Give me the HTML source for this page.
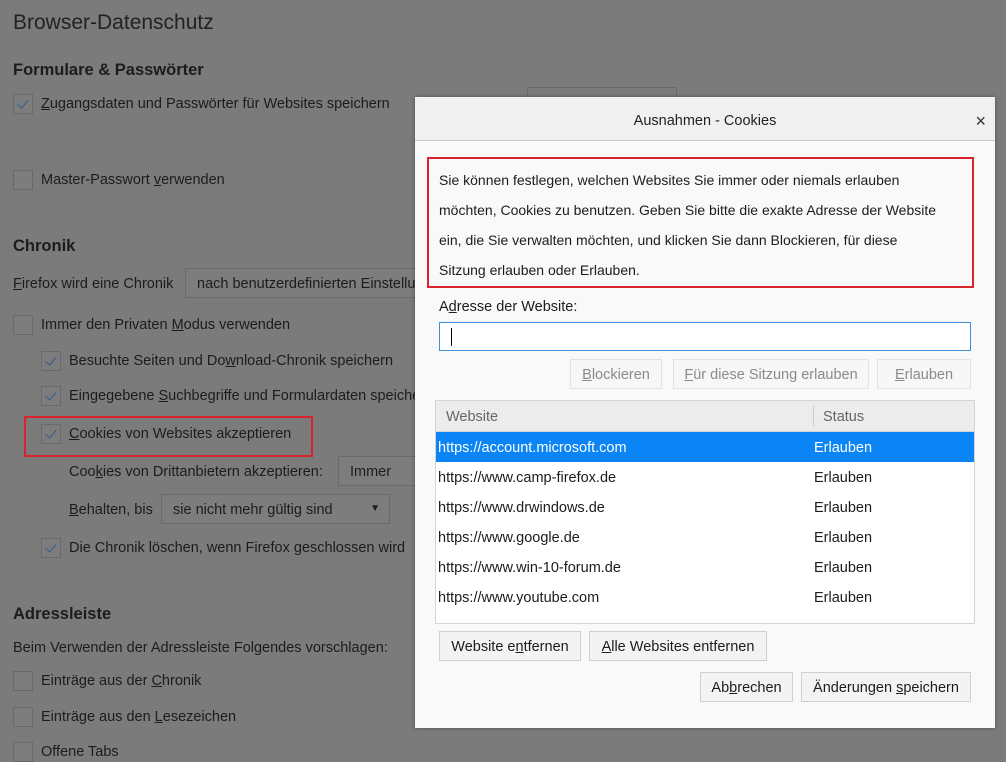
<!DOCTYPE html>
<html><head><meta charset="utf-8"><style>
*{box-sizing:border-box;margin:0;padding:0}
body{width:1006px;height:751px;overflow:hidden;background:#7b7b7b;font-family:"Liberation Sans",sans-serif;font-size:14.5px;color:#1c1c1c;position:relative}
#pg{position:absolute;left:0;top:2px;width:1006px;height:751px}
.a{position:absolute;white-space:nowrap}
.cb{position:absolute;width:20px;height:20px;border:1px solid #6a6a6a;background:#7d7d7d}
.cb.c::after{content:"";position:absolute;left:6px;top:2px;width:5px;height:10px;border:solid #2a5d92;border-width:0 1.5px 1.5px 0;transform:rotate(40deg)}
.sel{position:absolute;border:1px solid #6a6a6a;background:#7d7d7d;height:30px;padding:7px 11px}
u{text-decoration:underline}
h2{position:absolute;font-size:16.5px;font-weight:bold;white-space:nowrap}
#dlg{position:absolute;left:415px;top:97px;width:580px;height:631px;background:#f9f9f9;box-shadow:0 0 4px rgba(0,0,0,.35)}
#tb{position:absolute;left:0;top:0;width:580px;height:44px;background:#f0f0f0;border-bottom:1px solid #c8c8c8;text-align:center;line-height:48px;font-size:14.5px;color:#222}
.btn{position:absolute;height:30px;border:1px solid #cfcfcf;background:#f3f3f3;text-align:center;line-height:30px;font-size:14.5px;color:#1c1c1c}
.dis{color:#8a8a8a;background:#f7f7f7;border-color:#e3e3e3}
.row{position:absolute;width:538px;height:30px;line-height:32px;font-size:14.5px}
.row span{position:absolute;left:378px}
.row b{font-weight:normal;position:absolute;left:2px}
</style></head><body>
<div id="pg">
<div class="a" style="left:13px;top:9px;font-size:21px;color:#222;font-weight:300">Browser-Datenschutz</div>
<h2 style="left:13px;top:59px">Formulare &amp; Passwörter</h2>
<div class="cb c" style="left:13px;top:92px"></div><div class="a" style="left:41px;top:94px"><u>Z</u>ugangsdaten und Passwörter für Websites speichern</div>
<div class="a" style="left:527px;top:85px;width:150px;height:14px;border:1px solid #6a6a6a;border-bottom:none"></div>
<div class="cb" style="left:13px;top:168px"></div><div class="a" style="left:41px;top:170px">Master-Passwort <u>v</u>erwenden</div>
<h2 style="left:13px;top:235px">Chronik</h2>
<div class="a" style="left:13px;top:274px"><u>F</u>irefox wird eine Chronik</div>
<div class="sel a" style="left:185px;top:266px;width:240px">nach benutzerdefinierten Einstellungen</div>
<div class="cb" style="left:13px;top:313px"></div><div class="a" style="left:41px;top:315px">Immer den Privaten <u>M</u>odus verwenden</div>
<div class="cb c" style="left:41px;top:349px"></div><div class="a" style="left:69px;top:351px">Besuchte Seiten und Do<u>w</u>nload-Chronik speichern</div>
<div class="cb c" style="left:41px;top:384px"></div><div class="a" style="left:69px;top:386px">Eingegebene <u>S</u>uchbegriffe und Formulardaten speichern</div>
<div class="a" style="left:24px;top:414px;width:289px;height:41px;border:2px solid #d9232e"></div>
<div class="cb c" style="left:41px;top:422px"></div><div class="a" style="left:69px;top:424px"><u>C</u>ookies von Websites akzeptieren</div>
<div class="a" style="left:69px;top:462px">Coo<u>k</u>ies von Drittanbietern akzeptieren:</div>
<div class="sel a" style="left:338px;top:454px;width:100px">Immer</div>
<div class="a" style="left:69px;top:500px"><u>B</u>ehalten, bis</div>
<div class="sel a" style="left:161px;top:492px;width:229px">sie nicht mehr gültig sind<span style="position:absolute;right:9px;top:8px;font-size:10px">▼</span></div>
<div class="cb c" style="left:41px;top:536px"></div><div class="a" style="left:69px;top:538px">Die Chronik löschen, wenn Firefox <u>g</u>eschlossen wird</div>
<h2 style="left:13px;top:603px">Adressleiste</h2>
<div class="a" style="left:13px;top:638px">Beim Verwenden der Adressleiste Folgendes vorschlagen:</div>
<div class="cb" style="left:13px;top:669px"></div><div class="a" style="left:41px;top:671px">Einträge aus der <u>C</u>hronik</div>
<div class="cb" style="left:13px;top:705px"></div><div class="a" style="left:41px;top:707px">Einträge aus den <u>L</u>esezeichen</div>
<div class="cb" style="left:13px;top:740px"></div><div class="a" style="left:41px;top:742px">Offene Tabs</div>
</div>

<div id="dlg">
<div id="tb">Ausnahmen - Cookies<span style="position:absolute;right:9px;top:0;font-size:18px;color:#333">×</span></div>
<div class="a" style="left:12px;top:60px;width:547px;height:131px;border:2px solid #d9232e"></div>
<div class="a" style="left:24px;top:68px;line-height:30px;font-size:14px;white-space:normal;width:505px">Sie können festlegen, welchen Websites Sie immer oder niemals erlauben möchten, Cookies zu benutzen. Geben Sie bitte die exakte Adresse der Website ein, die Sie verwalten möchten, und klicken Sie dann Blockieren, für diese Sitzung erlauben oder Erlauben.</div>
<div class="a" style="left:24px;top:202px">A<u>d</u>resse der Website:</div>
<div class="a" style="left:24px;top:225px;width:532px;height:29px;border:1px solid #3d8fd6;background:#fff"><div style="position:absolute;left:11px;top:5px;width:1px;height:18px;background:#000"></div></div>
<div class="btn dis" style="left:155px;top:262px;width:92px"><u>B</u>lockieren</div>
<div class="btn dis" style="left:258px;top:262px;width:196px"><u>F</u>ür diese Sitzung erlauben</div>
<div class="btn dis" style="left:462px;top:262px;width:94px"><u>E</u>rlauben</div>
<div class="a" style="left:20px;top:303px;width:540px;height:224px;border:1px solid #d4d4d4;background:#fff">
<div class="a" style="left:0;top:0;width:538px;height:31px;background:#ececec;border-bottom:1px solid #d4d4d4;color:#666;line-height:33px"><span style="position:absolute;left:10px">Website</span><span style="position:absolute;left:377px;top:5px;height:20px;border-left:1px solid #ccc"></span><span style="position:absolute;left:387px">Status</span></div>
<div class="row" style="top:31px;background:#0b84f5;color:#fff;left:0"><b>https://account.microsoft.com</b><span>Erlauben</span></div>
<div class="row" style="top:61px;left:0"><b>https://www.camp-firefox.de</b><span>Erlauben</span></div>
<div class="row" style="top:91px;left:0"><b>https://www.drwindows.de</b><span>Erlauben</span></div>
<div class="row" style="top:121px;left:0"><b>https://www.google.de</b><span>Erlauben</span></div>
<div class="row" style="top:151px;left:0"><b>https://www.win-10-forum.de</b><span>Erlauben</span></div>
<div class="row" style="top:181px;left:0"><b>https://www.youtube.com</b><span>Erlauben</span></div>
</div>
<div class="btn" style="left:24px;top:534px;width:142px">Website e<u>n</u>tfernen</div>
<div class="btn" style="left:174px;top:534px;width:178px"><u>A</u>lle Websites entfernen</div>
<div class="btn" style="left:285px;top:575px;width:93px">Ab<u>b</u>rechen</div>
<div class="btn" style="left:386px;top:575px;width:170px">Änderungen <u>s</u>peichern</div>
</div>
</body></html>
